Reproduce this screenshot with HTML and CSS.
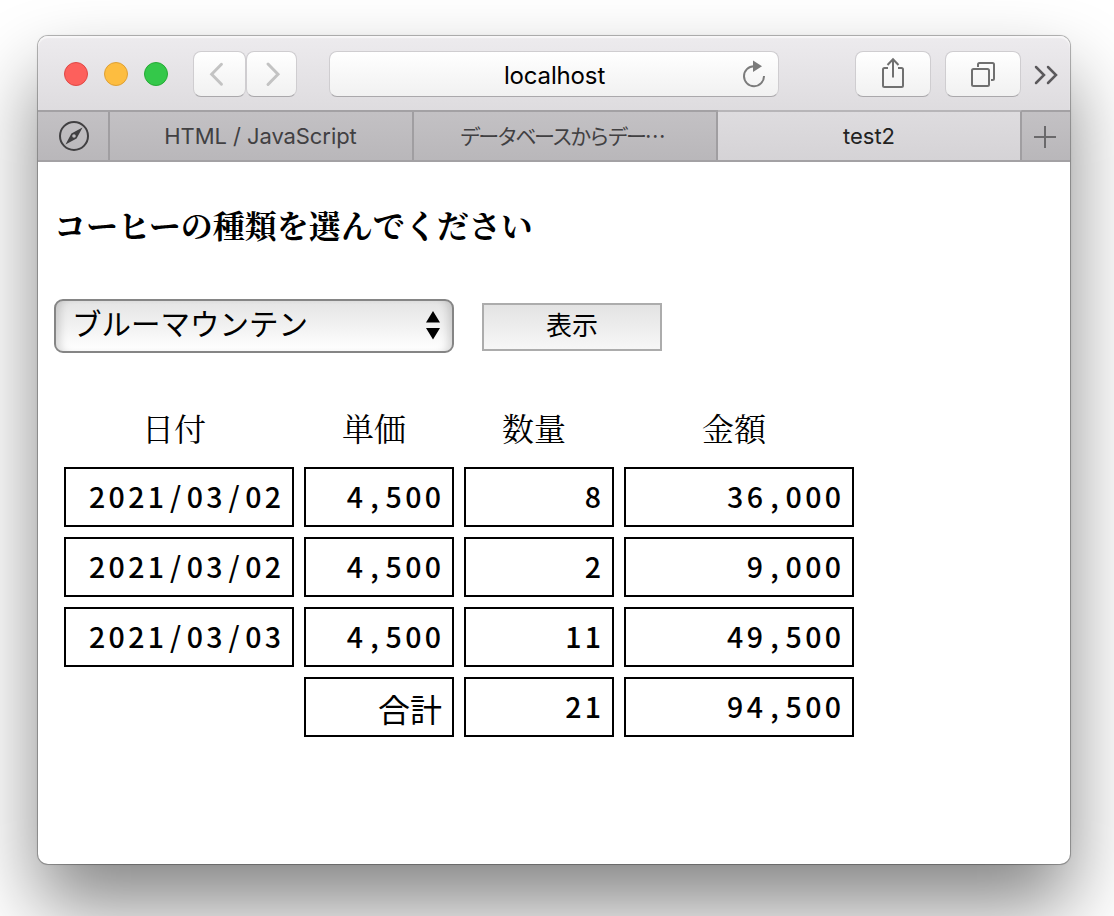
FILE: index.html
```html
<!DOCTYPE html>
<html lang="ja">
<head>
<meta charset="utf-8">
<title>test2</title>
<link rel="stylesheet" href="styles.css">
</head>
<body>
<div class="window">
  <header class="toolbar">
    <div class="lights"><i class="light red"></i><i class="light amber"></i><i class="light green"></i></div>
    <div class="nav">
      <div class="btn back"><svg width="52" height="44" viewBox="0 0 52 44"><path d="M28 12L18 22.2L28 32.5" fill="none" stroke="#c3c3c3" stroke-width="3" stroke-linecap="round"/></svg></div>
      <div class="btn forward"><svg width="49" height="44" viewBox="0 0 49 44"><path d="M21 12L31 22.2L21 32.5" fill="none" stroke="#c3c3c3" stroke-width="3" stroke-linecap="round"/></svg></div>
    </div>
    <div class="btn address"><span>localhost</span>
      <svg class="reload" width="26" height="30" viewBox="0 0 26 30"><path d="M23 16A10 10 0 1 1 13 6.2H15" fill="none" stroke="#7b7b7b" stroke-width="2"/><path d="M12 .5V12L21 6.2Z" fill="#7b7b7b"/></svg>
    </div>
    <div class="btn share"><svg width="74" height="44" viewBox="0 0 74 44"><path d="M32 16H28.500Q27 16 27 17.500V33.500Q27 35 28.500 35H45.500Q47 35 47 33.500V17.500Q47 16 45.500 16H42M37 25.500V7M31.500 13L37 7.300L42.500 13" fill="none" stroke="#707070" stroke-width="2"/></svg></div>
    <div class="btn overview"><svg width="74" height="44" viewBox="0 0 74 44"><g fill="none" stroke="#707070" stroke-width="2"><rect x="26" y="17" width="17" height="17" rx="1.500"/><path d="M32 15V12.500Q32 11 33.500 11H46.500Q48 11 48 12.500V26.500Q48 28 46.500 28H45"/></g></svg></div>
    <svg class="more" width="26" height="22" viewBox="0 0 26 22"><path d="M3 3L11 11L3 19M15 3L23 11L15 19" fill="none" stroke="#5b595c" stroke-width="2.500" stroke-linecap="round"/></svg>
  </header>
  <nav class="tabs">
    <div class="tab pin"><svg width="32" height="32" viewBox="0 0 32 32"><circle cx="16" cy="16" r="14" fill="none" stroke="#414042" stroke-width="2"/><path fill-rule="evenodd" d="M24.500 7.500L18.600 18.600L7.500 24.500L13.400 13.400ZM16 14.200A1.800 1.800 0 1 0 16 17.800A1.800 1.800 0 1 0 16 14.200Z" fill="#414042"/></svg></div>
    <div class="tab html">HTML / JavaScript</div>
    <div class="tab database">データベースからデー…</div>
    <div class="tab active">test2</div>
    <div class="tab add"><svg width="24" height="24" viewBox="0 0 24 24"><path d="M1 12H23M12 1V23" stroke="#6a696b" stroke-width="2"/></svg></div>
  </nav>
  <main class="page">
    <h1>コーヒーの種類を選んでください</h1>
    <div class="controls">
      <div class="select"><span>ブルーマウンテン</span><svg width="16" height="30" viewBox="0 0 16 30"><path d="M8 1L15 12.500H1ZM1 18H15L8 29.500Z"/></svg></div>
      <button class="show">表示</button>
    </div>
    <div class="sales">
      <div class="head">日付</div><div class="head">単価</div><div class="head">数量</div><div class="head">金額</div>
      <div class="cell">2021<span>/</span>03<span>/</span>02</div><div class="cell">4<span>,</span>500</div><div class="cell">8</div><div class="cell">36<span>,</span>000</div>
      <div class="cell">2021<span>/</span>03<span>/</span>02</div><div class="cell">4<span>,</span>500</div><div class="cell">2</div><div class="cell">9<span>,</span>000</div>
      <div class="cell">2021<span>/</span>03<span>/</span>03</div><div class="cell">4<span>,</span>500</div><div class="cell">11</div><div class="cell">49<span>,</span>500</div>
      <div></div><div class="cell total">合計</div><div class="cell">21</div><div class="cell">94<span>,</span>500</div>
    </div>
  </main>
</div>
</body>
</html>
```
FILE: styles.css
```css
* { box-sizing: border-box; }
body { margin: 0; height: 916px; padding: 36px 0 0 38px; background: #fff; overflow: hidden; color: #000; }
svg { display: block; }
.window { width: 1032px; height: 828px; border-radius: 10px; background: #fff; box-shadow: 0 0 0 1px rgba(0,0,0,.25), 0 0 3px rgba(0,0,0,.12), 0 42px 78px rgba(0,0,0,.48); }
.toolbar { height: 74px; display: flex; align-items: flex-start; padding: 15px 0 0 26px; border-radius: 10px 10px 0 0; background: linear-gradient(#edebee, #dedcdf); box-shadow: inset 0 2px 1px #f8f7f8; font-family: Inter, "Noto Sans CJK JP", sans-serif; }
.lights { display: flex; gap: 16px; padding-top: 11px; width: 129px; }
.light { width: 24px; height: 24px; border-radius: 50%; border: 1px solid; }
.red { background: #fd605c; border-color: #df4845; }
.amber { background: #fdbd40; border-color: #dea035; }
.green { background: #34c84a; border-color: #26aa35; }
.nav { display: flex; width: 136px; }
.btn { height: 46px; border: 1px solid #cfcdd0; border-bottom-color: #aaa8ab; border-radius: 8px; background: linear-gradient(#fff, #f1f1f1); display: flex; align-items: center; justify-content: center; }
.back { width: 53px; }
.forward { width: 51px; }
.address { width: 450px; font-size: 24px; position: relative; letter-spacing: -.15px; padding: 2px 0 0 1px; }
.reload { position: absolute; right: 11px; top: 8px; }
.share { width: 76px; margin-left: 76px; }
.overview { width: 76px; margin-left: 14px; }
.more { margin: 13px 0 0 12px; }
.tabs { display: grid; grid-template-columns: 72px 304px 304px 304px 48px; height: 52px; border-top: 2px solid #a3a1a4; border-bottom: 2px solid #a3a1a4; font: 22px Inter, "Noto Sans CJK JP", sans-serif; }
.tab { display: flex; align-items: center; justify-content: center; background: linear-gradient(#c3c1c4, #b9b7ba); border-right: 2px solid #a09ea1; color: #414042; white-space: nowrap; overflow: hidden; }
.pin { padding-left: 1px; }
.html { letter-spacing: -.08px; padding-right: 1px; }
.database { font-size: 21px; font-weight: 400; font-family: "Noto Sans CJK JP", sans-serif; letter-spacing: -2.4px; padding: 0 7px 3px 0; }
.active { background: linear-gradient(#dedcdf, #d5d3d6); color: #222; margin-top: -2px; border-top: 2px solid #b7b5b8; }
.add { border-right: 0; padding-top: 1px; padding-right: 2px; }
.page { padding: 39px 0 0 16px; }
h1 { margin: 0; font: 700 32px/46px "Noto Serif CJK JP", "Noto Sans CJK JP", serif; height: 98px; white-space: nowrap; }
.controls { display: flex; align-items: flex-start; gap: 28px; height: 106px; font-family: "Noto Sans CJK JP", sans-serif; }
.select { width: 400px; height: 54px; border: 2px solid #858585; border-radius: 9px; display: flex; align-items: center; justify-content: space-between; padding: 0 11px 2px 16px; font-size: 29.5px; line-height: 44px; background: linear-gradient(#e4e4e4, #fff); box-shadow: inset 9px 0 8px -5px rgba(0,0,0,.15), inset -9px 0 8px -5px rgba(0,0,0,.15); }
.select span { padding-bottom: 6px; }
.show { width: 180px; height: 48px; margin-top: 4px; padding: 0 0 6px; border: 2px solid #acacac; background: linear-gradient(#e3e3e3, #f7f7f7); font: 26px/38px "Noto Sans CJK JP", sans-serif; color: #000; }
.sales { display: grid; grid-template-columns: 230px 150px 150px 230px; grid-template-rows: 52px repeat(4, 60px); gap: 10px; padding: 0 0 0 10px; }
.head { font: 32px/45px "Noto Serif CJK JP", "Noto Sans CJK JP", serif; text-align: center; padding-right: 10px; }
.cell { border: 2px solid #000; padding: 0 7.5px 0 0; text-align: right; font: 500 28.5px/53px "Noto Sans CJK JP", sans-serif; letter-spacing: 3.4px; white-space: nowrap; }
.cell span { display: inline-block; width: 19.2px; padding-right: 3px; text-align: center; letter-spacing: 0; }
.total { font: 32px/59px "Noto Sans CJK JP", sans-serif; letter-spacing: 0; padding-right: 10px; }
```
